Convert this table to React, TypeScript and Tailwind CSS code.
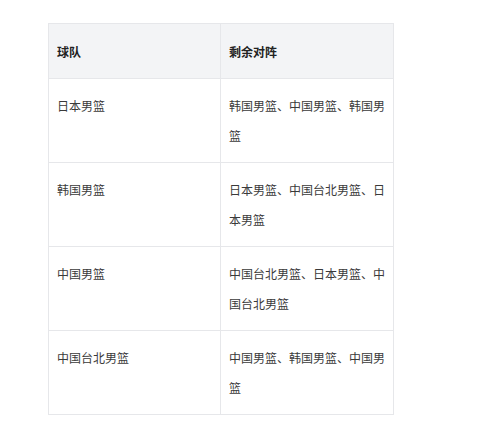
const rows = [
  { team: "日本男篮", rest: "韩国男篮、中国男篮、韩国男篮" },
  { team: "韩国男篮", rest: "日本男篮、中国台北男篮、日本男篮" },
  { team: "中国男篮", rest: "中国台北男篮、日本男篮、中国台北男篮" },
  { team: "中国台北男篮", rest: "中国男篮、韩国男篮、中国男篮" },
];

export default function App() {
  return (
    <div
      className="min-h-screen bg-white pt-[23px] pl-[48px]"
      style={{ fontFamily: '"Noto Sans CJK SC", "Noto Sans", sans-serif' }}
    >
      <table className="w-[345px] table-fixed border-collapse text-[12px] leading-[30px] text-[#3a3a3a]">
        <colgroup>
          <col className="w-[172px]" />
          <col className="w-[173px]" />
        </colgroup>
        <thead>
          <tr className="bg-[#f3f4f6]">
            <th className="border border-[#e6e7ea] pt-[13px] pb-[11px] pl-2 pr-1 text-left font-bold text-[#222]">
              球队
            </th>
            <th className="border border-[#e6e7ea] pt-[13px] pb-[11px] pl-2 pr-1 text-left font-bold text-[#222]">
              剩余对阵
            </th>
          </tr>
        </thead>
        <tbody>
          {rows.map((r) => (
            <tr key={r.team}>
              <td className="border border-[#e6e7ea] pt-3 pb-[11px] pl-2 pr-1 align-top">
                {r.team}
              </td>
              <td className="border border-[#e6e7ea] pt-3 pb-[11px] pl-2 pr-1 align-top">
                {r.rest}
              </td>
            </tr>
          ))}
        </tbody>
      </table>
    </div>
  );
}
